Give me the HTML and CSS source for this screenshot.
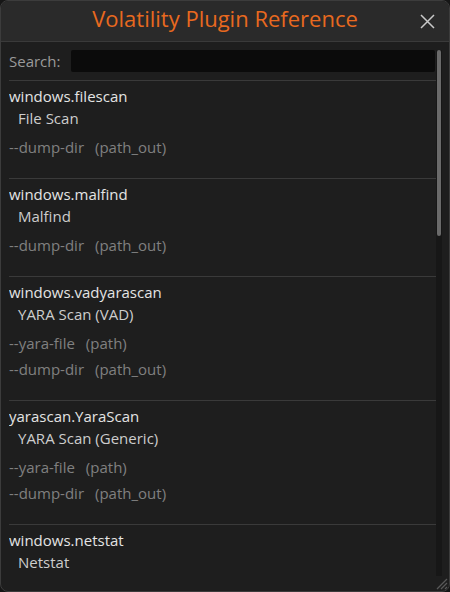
FILE: index.html
```html
<!DOCTYPE html>
<html>
<head>
<meta charset="utf-8">
<link rel="stylesheet" href="styles.css">
</head>
<body>
<div class="window">
  <div class="titlebar">
    <span class="spacer"></span>
    <span class="title">Volatility Plugin Reference</span>
    <span class="close">
      <svg width="15" height="15" viewBox="0 0 15 15"><path d="M1 1 L14 14 M14 1 L1 14" stroke="#c9c9c9" stroke-width="1.5" fill="none"/></svg>
    </span>
  </div>
  <div class="body">
    <div class="list">
      <div class="search-row">
        <span class="search-label">Search:</span>
        <div class="search-input"></div>
      </div>
      <div class="sep"></div>
      <div class="entry">
        <div class="name">windows.filescan</div>
        <div class="desc">File Scan</div>
        <div class="args">
          <div class="arg"><span class="flag">--dump-dir</span><span class="type">(path_out)</span></div>
        </div>
      </div>
      <div class="sep"></div>
      <div class="entry">
        <div class="name">windows.malfind</div>
        <div class="desc">Malfind</div>
        <div class="args">
          <div class="arg"><span class="flag">--dump-dir</span><span class="type">(path_out)</span></div>
        </div>
      </div>
      <div class="sep"></div>
      <div class="entry">
        <div class="name">windows.vadyarascan</div>
        <div class="desc">YARA Scan (VAD)</div>
        <div class="args">
          <div class="arg"><span class="flag">--yara-file</span><span class="type">(path)</span></div>
          <div class="arg"><span class="flag">--dump-dir</span><span class="type">(path_out)</span></div>
        </div>
      </div>
      <div class="sep"></div>
      <div class="entry">
        <div class="name">yarascan.YaraScan</div>
        <div class="desc">YARA Scan (Generic)</div>
        <div class="args">
          <div class="arg"><span class="flag">--yara-file</span><span class="type">(path)</span></div>
          <div class="arg"><span class="flag">--dump-dir</span><span class="type">(path_out)</span></div>
        </div>
      </div>
      <div class="sep"></div>
      <div class="entry">
        <div class="name">windows.netstat</div>
        <div class="desc">Netstat</div>
      </div>
    </div>
    <div class="scrollbar"><div class="thumb"></div></div>
  </div>
  <div class="grip">
    <svg width="16" height="16" viewBox="0 0 16 16"><path d="M15 5 L5 15 M15 9 L9 15 M15 13 L13 15" stroke="#585858" stroke-width="1.3" fill="none"/></svg>
  </div>
</div>
</body>
</html>
```

FILE: styles.css
```css
html, body {
  margin: 0;
  padding: 0;
  background: #161616;
}
body {
  font-family: "Open Sans", "Noto Sans", sans-serif;
  font-size: 15px;
}
.window {
  position: relative;
  width: 450px;
  height: 592px;
  box-sizing: border-box;
  border: 1px solid #3c3c3c;
  border-radius: 8px;
  background: #1e1e1e;
  display: flex;
  flex-direction: column;
  overflow: hidden;
}
.titlebar {
  height: 41px;
  box-sizing: border-box;
  flex: none;
  background: #2a2a2a;
  border-bottom: 1px solid #3a3a3a;
  display: grid;
  grid-template-columns: 1fr auto 1fr;
  align-items: center;
}
.title {
  color: #e8691f;
  font-size: 22px;
  line-height: 35px;
  align-self: start;
  white-space: nowrap;
}
.close {
  justify-self: end;
  width: 15px;
  height: 15px;
  margin-right: 14px;
  display: flex;
}
.body {
  flex: 1;
  min-height: 0;
  display: flex;
  padding: 8px 7px 15px 8px;
}
.list {
  width: 428px;
  overflow: hidden;
}
.search-row {
  display: flex;
  align-items: center;
  height: 22px;
}
.search-label {
  color: #9a9a9a;
  width: 62px;
  line-height: 22px;
}
.search-input {
  width: 364px;
  height: 22px;
  background: #0b0b0b;
  border-radius: 2px;
}
.sep {
  height: 1px;
  background: #3a3a3a;
  width: 429px;
}
.search-row + .sep {
  margin-top: 8px;
}
.entry {
  padding: 5px 0 21px;
}
.name {
  color: #e4e4e4;
  line-height: 20px;
  white-space: nowrap;
}
.desc {
  color: #cdcdcd;
  line-height: 20px;
  margin-top: 2px;
  padding-left: 9px;
  white-space: nowrap;
}
.args {
  margin-top: 9px;
  display: flex;
  flex-direction: column;
  gap: 6px;
}
.arg {
  line-height: 20px;
  color: #808080;
  white-space: nowrap;
  display: flex;
  gap: 11px;
}
.scrollbar {
  width: 6px;
  background: #171717;
  display: flex;
  justify-content: center;
}
.thumb {
  width: 4px;
  height: 186px;
  background: #6a6a6a;
  border-radius: 2px;
}
.grip {
  position: absolute;
  right: 1px;
  bottom: 1px;
  width: 16px;
  height: 16px;
}
```
